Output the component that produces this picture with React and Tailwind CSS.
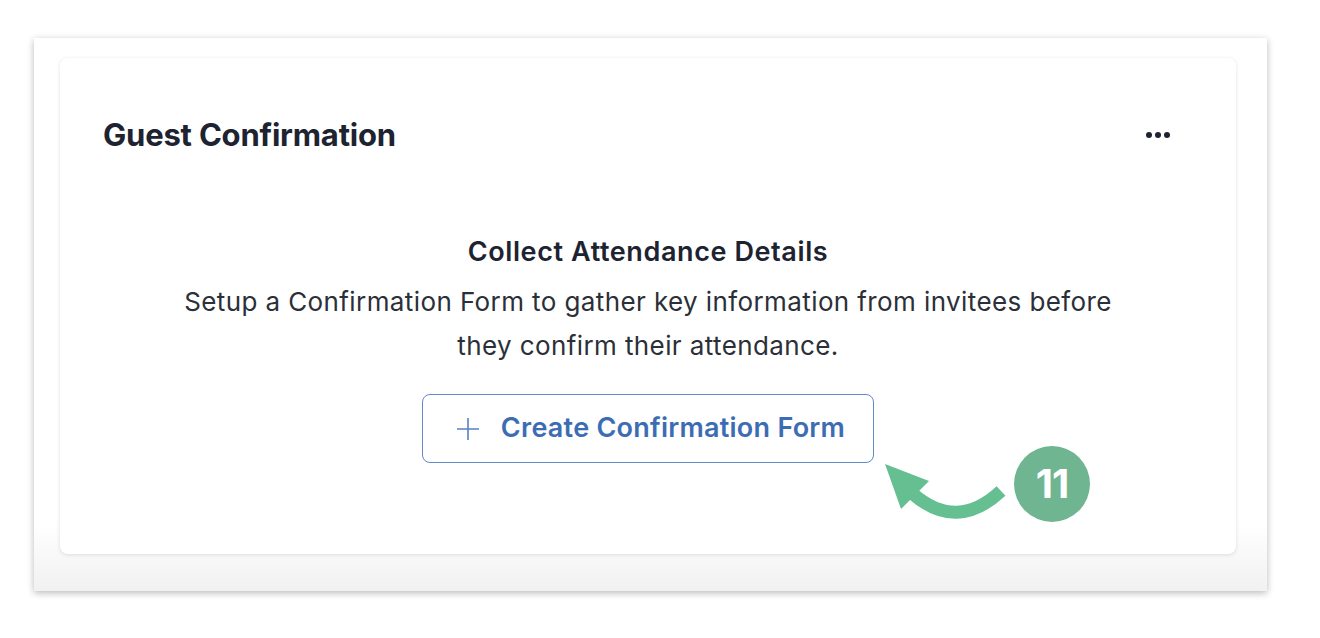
function MoreDots() {
  return (
    <button className="flex items-center gap-[3px] p-1" aria-label="More">
      <span className="h-[6px] w-[6px] rounded-full bg-[#1d2330]" />
      <span className="h-[6px] w-[6px] rounded-full bg-[#1d2330]" />
      <span className="h-[6px] w-[6px] rounded-full bg-[#1d2330]" />
    </button>
  );
}

function PlusIcon() {
  return (
    <svg width="24" height="24" viewBox="0 0 24 24" fill="none" stroke="currentColor" strokeWidth="1.6">
      <path d="M12 1v22M1 12h22" />
    </svg>
  );
}

function StepCallout() {
  // annotation overlay: curved arrow + numbered badge
  return (
    <svg
      className="pointer-events-none absolute left-0 top-0"
      width="1320"
      height="638"
      viewBox="0 0 1320 638"
    >
      <path d="M1001 491 Q957 532 913 494" fill="none" stroke="#66bf91" strokeWidth="13" />
      <polygon points="885,464 929,481 901,509" fill="#66bf91" />
      <circle cx="1052" cy="484" r="38" fill="#6fb591" />
    </svg>
  );
}

export default function App() {
  return (
    <div className="relative h-[638px] w-[1320px] overflow-hidden bg-white pl-[34px] pt-[38px] font-['Inter',sans-serif]">
      <div className="h-[553px] w-[1233px] bg-linear-to-b from-white from-88% to-[#f1f1f1] pl-[26px] pt-[20px] shadow-[0_2px_7px_rgba(0,0,0,0.28)]">
        <div className="flex h-[496px] w-[1176px] flex-col rounded-lg bg-white shadow-[0_1px_4px_rgba(0,0,0,0.12)]">
          <div className="flex items-center justify-between pl-[43px] pr-[62px] pt-[58px]">
            <h2 className="text-[31px] font-bold leading-[38px] tracking-[-0.2px] text-[#1d2330]">
              Guest Confirmation
            </h2>
            <MoreDots />
          </div>

          <div className="mt-[82px] flex flex-col items-center text-center">
            <h3 className="text-[27px] font-semibold leading-[32px] tracking-[0.6px] text-[#1d2330]">
              Collect Attendance Details
            </h3>
            <p className="mt-[12px] max-w-[940px] text-[26px] leading-[44px] tracking-[0.4px] text-[#2b3038]">
              Setup a Confirmation Form to gather key information from invitees before they
              confirm their attendance.
            </p>
            <button className="mt-[26px] flex h-[69px] items-center gap-[21px] rounded-[8px] border border-[#6189c9] bg-white pl-[33px] pr-[28px] text-[27px] font-semibold tracking-[0.25px] text-[#3c6db3]">
              <span className="text-[#5a80c0]">
                <PlusIcon />
              </span>
              Create Confirmation Form
            </button>
          </div>
        </div>
      </div>

      <StepCallout />
      <div className="absolute left-[1014px] top-[446px] flex h-[76px] w-[76px] items-center justify-center text-[40px] font-bold tracking-[-1px] text-white">
        11
      </div>
    </div>
  );
}
